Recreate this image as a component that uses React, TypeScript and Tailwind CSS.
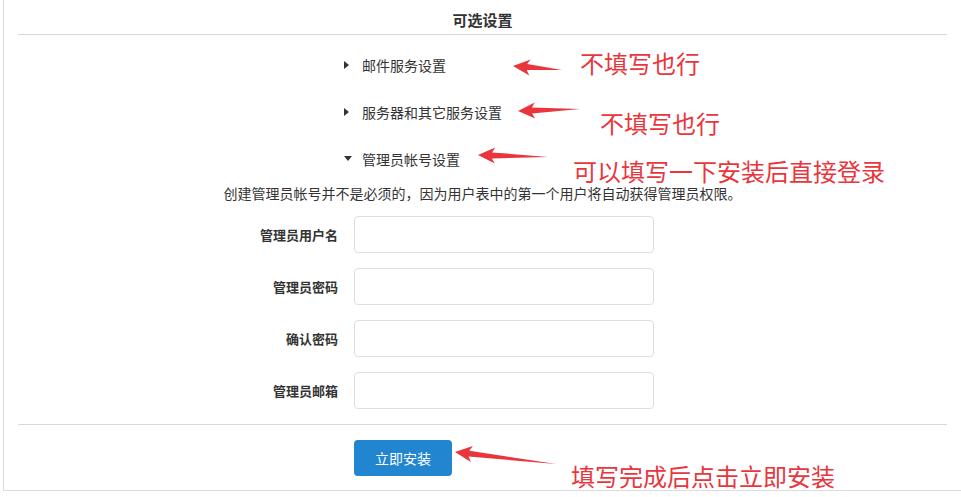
const FONT = { fontFamily: '"Noto Sans CJK SC", "Noto Sans", sans-serif' };

const SECTIONS = [
  { label: "邮件服务设置", open: false },
  { label: "服务器和其它服务设置", open: false },
  { label: "管理员帐号设置", open: true },
];

const FIELDS = ["管理员用户名", "管理员密码", "确认密码", "管理员邮箱"];

type Pt = [number, number];

// Tapered annotation arrow: head at `tip`, thin tail at `tail`.
function arrowPoints(tip: Pt, tail: Pt) {
  const dx = tail[0] - tip[0];
  const dy = tail[1] - tip[1];
  const len = Math.hypot(dx, dy);
  const ux = dx / len;
  const uy = dy / len;
  const nx = -uy;
  const ny = ux;
  const at = (a: number, b: number): string =>
    `${(tip[0] + ux * a + nx * b).toFixed(1)},${(tip[1] + uy * a + ny * b).toFixed(1)}`;
  return [
    at(0, 0),
    at(17, 8),
    at(14, 3),
    `${tail[0]},${tail[1]}`,
    at(14, -3),
    at(17, -8),
  ].join(" ");
}

const ARROWS: [Pt, Pt][] = [
  [[513, 66], [562, 70]],
  [[518, 111], [580, 109]],
  [[478, 155], [548, 157]],
  [[455, 452], [556, 464]],
];

const NOTES = [
  { text: "不填写也行", cls: "left-[580px] top-[51px]" },
  { text: "不填写也行", cls: "left-[600px] top-[111px]" },
  { text: "可以填写一下安装后直接登录", cls: "left-[573px] top-[159px]" },
  { text: "填写完成后点击立即安装", cls: "left-[571px] top-[464px]" },
];

function Caret({ open }: { open: boolean }) {
  return open ? (
    <span className="block h-0 w-0 border-x-[4px] border-t-[5px] border-x-transparent border-t-[#333]" />
  ) : (
    <span className="block h-0 w-0 border-y-[4px] border-l-[5px] border-y-transparent border-l-[#333]" />
  );
}

export default function App() {
  return (
    <div className="relative h-[497px] w-[961px] overflow-hidden bg-white text-[#333]" style={FONT}>
      <div className="ml-[3px] h-[491px] w-[980px] border-b border-l border-[#dcdcdc] pl-[14px]">
        <div className="w-[929px]">
          <div className="pt-[11px] text-center text-[15px] font-bold leading-[18px]">可选设置</div>
          <div className="mt-[5px] h-px bg-[#d8d8d8]" />

          <div className="mt-[6px] pl-[325px]">
            {SECTIONS.map((s) => (
              <div key={s.label} className="flex h-[47px] items-center">
                <span className="flex w-[19px] justify-start pl-[1px]">
                  <Caret open={s.open} />
                </span>
                <span className="text-[14px] leading-[18px]">{s.label}</span>
              </div>
            ))}
          </div>

          <p className="mt-[2px] text-center text-[14px] leading-[18px]">
            创建管理员帐号并不是必须的，因为用户表中的第一个用户将自动获得管理员权限。
          </p>

          <div className="mt-[14px] flex flex-col gap-[15px]">
            {FIELDS.map((f) => (
              <div key={f} className="flex items-center">
                <label className="w-[336px] shrink-0 pr-[16px] text-right text-[13px] font-bold leading-[18px]">{f}</label>
                <input className="h-[37px] w-[300px] rounded-[4px] border border-[#dedede] bg-white px-3 text-[14px] outline-none" />
              </div>
            ))}
          </div>

          <div className="mt-[15px] h-px bg-[#d8d8d8]" />

          <div className="mt-[15px] pl-[336px]">
            <button
              type="button"
              className="h-[36px] w-[98px] rounded-[4px] bg-[#2185d0] text-[14px] text-white"
            >
              立即安装
            </button>
          </div>
        </div>
      </div>

      <svg className="pointer-events-none absolute inset-0" width={961} height={497}>
        {ARROWS.map(([tip, tail], i) => (
          <polygon key={i} points={arrowPoints(tip, tail)} fill="#e8363c" />
        ))}
      </svg>

      {NOTES.map((n, i) => (
        <span
          key={i}
          className={`absolute whitespace-nowrap text-[24px] leading-[24px] text-[#e8363c] ${n.cls}`}
        >
          {n.text}
        </span>
      ))}
    </div>
  );
}
